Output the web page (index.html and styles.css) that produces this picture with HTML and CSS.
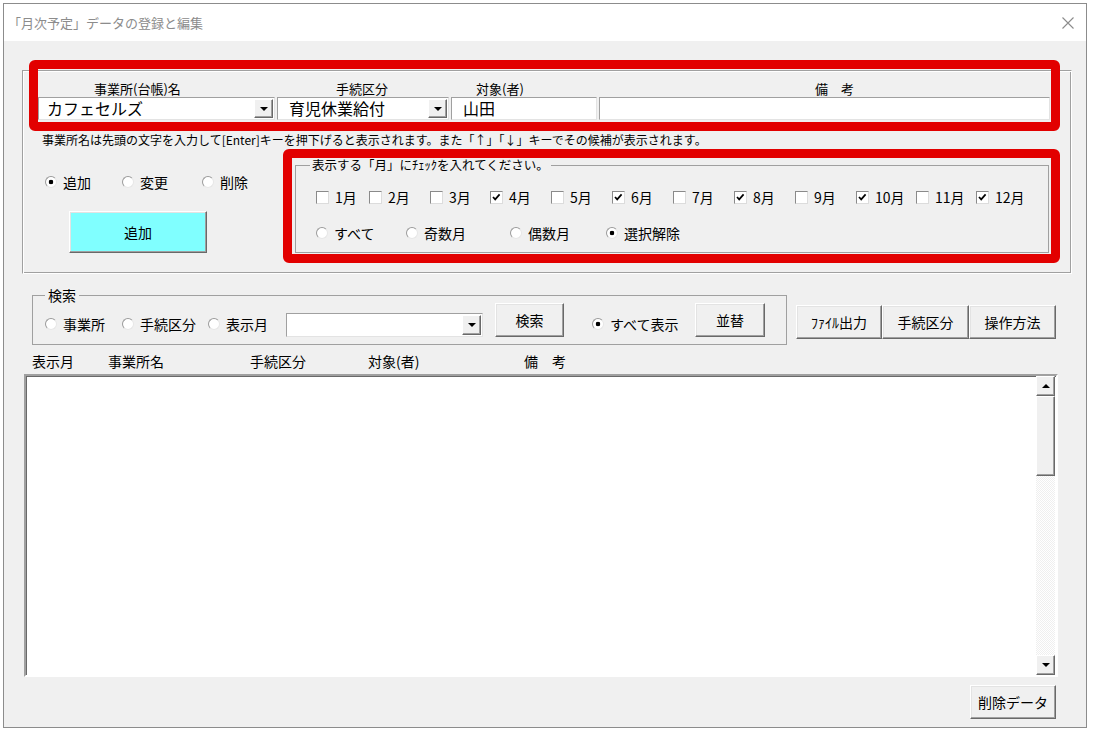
FILE: index.html
```html
<!DOCTYPE html>
<html lang="ja">
<head>
    <meta charset="UTF-8">
    <title>「月次予定」データの登録と編集</title>
    <link rel="stylesheet" href="styles.css">
</head>
<body>
<div class="window">
    <div class="titlebar">
        <span class="title">「月次予定」データの登録と編集</span>
        <svg class="close" width="12" height="12" viewBox="0 0 12 12"><path d="M0.5 0.5 L11.5 11.5 M11.5 0.5 L0.5 11.5" stroke="#8c8c8c" stroke-width="1.1" fill="none"/></svg>
    </div>
    <div class="client">
        <div class="panel">
            <div class="fields labels">
                <div class="f1">事業所(台帳)名</div>
                <div class="f2">手続区分</div>
                <div class="f3">対象(者)</div>
                <div class="f4">備　考</div>
            </div>
            <div class="fields inputs">
                <div class="combo f1"><span class="value">カフェセルズ</span><span class="drop"></span></div>
                <div class="combo f2"><span class="value">育児休業給付</span><span class="drop"></span></div>
                <div class="textbox f3"><span class="value">山田</span></div>
                <div class="textbox f4"></div>
            </div>
            <p class="hint">事業所名は先頭の文字を入力して[Enter]キーを押下げると表示されます。また「↑」「↓」キーでその候補が表示されます。</p>
            <div class="mid">
                <div class="mode">
                    <div class="opts">
                        <span class="opt" style="width:77px"><span class="radio on"></span>追加</span>
                        <span class="opt" style="width:80px"><span class="radio"></span>変更</span>
                        <span class="opt"><span class="radio"></span>削除</span>
                    </div>
                    <button class="btn add">追加</button>
                </div>
                <fieldset class="group months">
                    <legend>表示する「月」にﾁｪｯｸを入れてください。</legend>
                    <div class="checks">
                        <span class="chk" style="width:53px"><span class="box"></span>1月</span>
                        <span class="chk" style="width:61px"><span class="box"></span>2月</span>
                        <span class="chk" style="width:60px"><span class="box"></span>3月</span>
                        <span class="chk" style="width:61px"><span class="box"><svg width="11" height="11" viewBox="0 0 11 11"><path d="M2 5 L4.2 7.4 L8.6 2.4" fill="none" stroke="#000" stroke-width="1.7"/></svg></span>4月</span>
                        <span class="chk" style="width:61px"><span class="box"></span>5月</span>
                        <span class="chk" style="width:61px"><span class="box"><svg width="11" height="11" viewBox="0 0 11 11"><path d="M2 5 L4.2 7.4 L8.6 2.4" fill="none" stroke="#000" stroke-width="1.7"/></svg></span>6月</span>
                        <span class="chk" style="width:61px"><span class="box"></span>7月</span>
                        <span class="chk" style="width:61px"><span class="box"><svg width="11" height="11" viewBox="0 0 11 11"><path d="M2 5 L4.2 7.4 L8.6 2.4" fill="none" stroke="#000" stroke-width="1.7"/></svg></span>8月</span>
                        <span class="chk" style="width:61px"><span class="box"></span>9月</span>
                        <span class="chk" style="width:60px"><span class="box"><svg width="11" height="11" viewBox="0 0 11 11"><path d="M2 5 L4.2 7.4 L8.6 2.4" fill="none" stroke="#000" stroke-width="1.7"/></svg></span>10月</span>
                        <span class="chk" style="width:60px"><span class="box"></span>11月</span>
                        <span class="chk"><span class="box"><svg width="11" height="11" viewBox="0 0 11 11"><path d="M2 5 L4.2 7.4 L8.6 2.4" fill="none" stroke="#000" stroke-width="1.7"/></svg></span>12月</span>
                    </div>
                    <div class="opts month-opts">
                        <span class="opt" style="width:90px"><span class="radio"></span>すべて</span>
                        <span class="opt" style="width:104px"><span class="radio"></span>奇数月</span>
                        <span class="opt" style="width:96px"><span class="radio"></span>偶数月</span>
                        <span class="opt"><span class="radio on"></span>選択解除</span>
                    </div>
                </fieldset>
            </div>
        </div>

        <div class="search-row">
            <fieldset class="group search">
                <legend>検索</legend>
                <div class="srow">
                    <span class="opt" style="width:77px"><span class="radio"></span>事業所</span>
                    <span class="opt" style="width:86px"><span class="radio"></span>手続区分</span>
                    <span class="opt" style="width:78px"><span class="radio"></span>表示月</span>
                    <div class="combo scombo"><span class="value"></span><span class="drop"></span></div>
                    <button class="btn find">検索</button>
                    <span class="opt all" style="width:103px"><span class="radio on"></span>すべて表示</span>
                    <button class="btn sort">並替</button>
                </div>
            </fieldset>
            <div class="tools">
                <button class="btn" style="width:86px">ﾌｧｲﾙ出力</button>
                <button class="btn" style="width:87px">手続区分</button>
                <button class="btn" style="width:87px">操作方法</button>
            </div>
        </div>

        <div class="list-head">
            <span style="width:76px">表示月</span>
            <span style="width:142px">事業所名</span>
            <span style="width:118px">手続区分</span>
            <span style="width:156px">対象(者)</span>
            <span>備　考</span>
        </div>
        <div class="list">
            <div class="vscroll">
                <div class="sb-btn"><span class="arrow up"></span></div>
                <div class="thumb"></div>
                <div class="track"></div>
                <div class="sb-btn"><span class="arrow"></span></div>
            </div>
        </div>
        <div class="footer">
            <button class="btn" style="width:86px">削除データ</button>
        </div>
    </div>

    <div class="mark mark-top"></div>
    <div class="mark mark-months"></div>
</div>
</body>
</html>
```

FILE: styles.css
```css
* {
    box-sizing: border-box;
}
body {
    margin: 0;
    background: #fff;
    font-family: "Noto Sans CJK JP", "Noto Sans", sans-serif;
    font-size: 14px;
    color: #000;
}
.window {
    position: relative;
    margin: 3px 0 0 3px;
    width: 1084px;
    height: 725px;
    border: 1px solid #8c8c8c;
    background: #f0f0f0;
}
.titlebar {
    height: 37px;
    background: #fff;
    display: flex;
    align-items: center;
    justify-content: space-between;
    padding: 0 12px 0 4px;
}
.title {
    font-size: 13px;
    color: #8c8c8c;
}
.client {
    padding: 29px 27px 0 18px;
}

/* top frame */
.panel {
    width: 1050px;
    height: 204px;
    border: 1px solid;
    border-color: #a0a0a0 #fff #fff #a0a0a0;
    box-shadow: inset 1px 1px 0 #fff, inset -1px -1px 0 #a0a0a0;
    padding: 10px 0 0 15px;
}
.fields {
    display: flex;
    gap: 2px;
}
.f1 { width: 237px; }
.f2 { width: 172px; }
.f3 { width: 146px; }
.f4 { width: 451px; }
.labels {
    height: 16px;
    font-size: 13px;
    line-height: 15px;
}
.labels .f1 { padding-left: 56px; }
.labels .f2 { padding-left: 59px; }
.labels .f3 { padding-left: 25px; }
.labels .f4 { padding-left: 216px; }
.inputs {
    height: 23px;
}
.combo, .textbox {
    background: #fff;
    border: 1px solid;
    border-color: #a0a0a0 #e3e3e3 #e3e3e3 #a0a0a0;
    display: flex;
    align-items: center;
    font-size: 16px;
}
.value {
    flex: 1;
    padding-left: 8px;
    line-height: 21px;
    white-space: nowrap;
}
.f2 .value, .f3 .value {
    padding-left: 11px;
}
.drop {
    width: 19px;
    height: 19px;
    margin-right: 1px;
    background: #f0f0f0;
    border: 1px solid;
    border-color: #fff #696969 #696969 #fff;
    box-shadow: inset -1px -1px 0 #a0a0a0;
    display: flex;
    align-items: center;
    justify-content: center;
}
.drop::after, .arrow {
    content: "";
    width: 0;
    height: 0;
    border-left: 4px solid transparent;
    border-right: 4px solid transparent;
    border-top: 4px solid #000;
}
.arrow.up {
    border-top: 0;
    border-bottom: 4px solid #000;
}
.hint {
    margin: 12px 0 0 4px;
    font-size: 12px;
    line-height: 16px;
    white-space: nowrap;
}
.mid {
    display: flex;
    margin-top: 10px;
}
.mode {
    width: 257px;
}
.opts {
    display: flex;
    height: 20px;
}
.mode .opts {
    margin: 14px 0 0 7px;
}
.opt {
    display: inline-flex;
    align-items: center;
    gap: 6px;
    height: 20px;
    font-size: 14px;
    white-space: nowrap;
}
.radio {
    width: 12px;
    height: 12px;
    border-radius: 50%;
    background: #fff;
    border: 1px solid;
    border-color: #9a9a9a #e6e6e6 #e6e6e6 #9a9a9a;
    flex: none;
}
.radio.on {
    background: radial-gradient(circle, #000 0 2px, #fff 2.6px);
}
.btn {
    font: inherit;
    font-size: 14px;
    color: #000;
    background: #f0f0f0;
    border: 1px solid;
    border-color: #fff #696969 #696969 #fff;
    box-shadow: inset -1px -1px 0 #a0a0a0, inset 1px 1px 0 #e3e3e3;
    padding: 0;
    height: 34px;
    white-space: nowrap;
}
.add {
    margin: 19px 0 0 31px;
    width: 138px;
    height: 42px;
    background: #80ffff;
}
.group {
    margin: 0;
    border: 1px solid #a0a0a0;
    min-width: 0;
}
.months {
    width: 754px;
    padding: 0 0 8px 14px;
}
.months legend {
    font-size: 12.5px;
    line-height: 14px;
    padding: 0 2px;
    white-space: nowrap;
}
.checks {
    display: flex;
    height: 20px;
    margin: 15px 0 0 6px;
}
.chk {
    display: inline-flex;
    align-items: center;
    gap: 6px;
    font-size: 14px;
    white-space: nowrap;
}
.box {
    width: 13px;
    height: 13px;
    background: #fff;
    border: 1px solid;
    border-color: #8a8a8a #dcdcdc #dcdcdc #8a8a8a;
    flex: none;
    display: flex;
}
.month-opts {
    margin: 16px 0 0 6px;
}

/* search */
.search-row {
    display: flex;
    margin-top: 14px;
}
.search {
    width: 755px;
    margin-left: 10px;
    padding: 1px 0 7px 12px;
}
.search legend {
    font-size: 14px;
    line-height: 14px;
    padding: 0 3px;
}
.srow {
    display: flex;
    align-items: flex-end;
    height: 34px;
}
.srow .opt {
    margin-bottom: 3px;
}
.scombo {
    width: 197px;
    height: 24px;
}
.scombo .drop {
    height: 20px;
}
.find {
    margin-left: 12px;
    width: 69px;
}
.all {
    margin-left: 28px;
}
.sort {
    width: 70px;
}
.tools {
    display: flex;
    margin: 17px 0 0 9px;
}

/* list */
.list-head {
    display: flex;
    margin-top: 8px;
    padding-left: 10px;
    height: 16px;
    line-height: 16px;
    font-size: 14px;
}
.list {
    margin: 5px 0 0 2px;
    width: 1034px;
    height: 303px;
    background: #fff;
    border: 2px solid;
    border-color: #a0a0a0 #fff #fff #a0a0a0;
    box-shadow: inset 1px 1px 0 #696969;
    display: flex;
    justify-content: flex-end;
    padding: 0 1px 0 0;
}
.vscroll {
    width: 19px;
    display: flex;
    flex-direction: column;
}
.sb-btn, .thumb {
    background: #f0f0f0;
    border: 1px solid;
    border-color: #fff #696969 #696969 #fff;
    box-shadow: inset -1px -1px 0 #a0a0a0;
}
.sb-btn {
    height: 20px;
    display: flex;
    align-items: center;
    justify-content: center;
}
.thumb {
    height: 80px;
}
.track {
    flex: 1;
    background: repeating-conic-gradient(#fff 0 25%, #efefef 0 50%) 0 0 / 2px 2px;
}
.footer {
    margin-top: 8px;
    text-align: right;
    padding-right: 3px;
}

/* red highlight marks */
.mark {
    position: absolute;
    border: 9px solid #e20000;
    border-radius: 6px;
    pointer-events: none;
}
.mark-top {
    left: 25px;
    top: 56px;
    width: 1031px;
    height: 71px;
}
.mark-months {
    left: 279px;
    top: 145px;
    width: 777px;
    height: 114px;
}
```
